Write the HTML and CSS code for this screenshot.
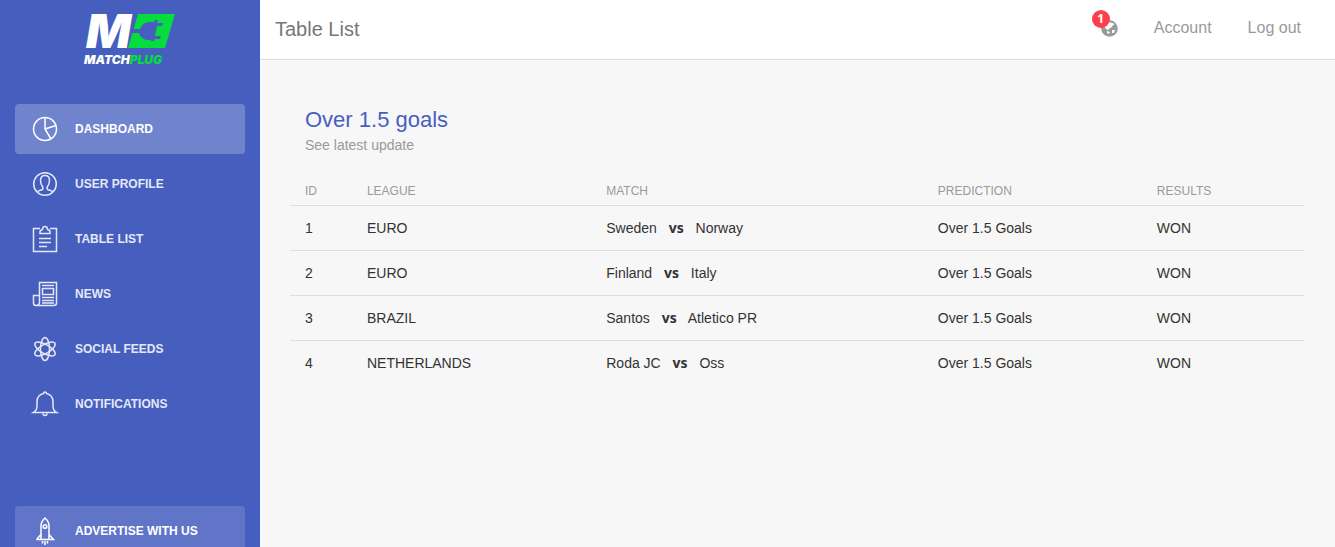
FILE: index.html
```html
<!DOCTYPE html>
<html lang="en">
<head>
  <meta charset="UTF-8" />
  <meta name="viewport" content="width=device-width, initial-scale=1.0" />
  <title>MatchPlug</title>
  <link rel="stylesheet" href="styles.css">
</head>
<body>
  <div class="wrapper">
    <aside class="sidebar">
      <a href="#" class="logo" aria-label="MatchPlug">
        <svg width="92" height="56" viewBox="0 0 92 56">
          <text class="logo-m" x="2" y="38">M</text>
          <path fill="#05dc3e" d="M54 4H91L81 38H44Z"/>
          <path fill="#465fbf" d="M48 19H56Q59 12 65 12H70L71 10H74L73 13H79L78 16H73L71 26H77L76 29H71L70 31H67V30H64Q57 30 55 23H46Z"/>
          <text class="logo-name" x="0" y="54">MATCH<tspan fill="#05dc3e">PLUG</tspan></text>
        </svg>
      </a>
      <ul class="nav">
        <li class="active">
          <a href="#">
            <svg class="icon" viewBox="0 0 28 28"><circle cx="14" cy="14" r="11.5"/><path d="M14 2.5V14L20 24M14 14L25 10.5"/></svg>
            Dashboard
          </a>
        </li>
        <li>
          <a href="#">
            <svg class="icon" viewBox="0 0 28 28"><circle cx="14" cy="14" r="11.3"/><path d="M6 22Q7.500 20.500 11.500 19.500Q12.500 18 11.500 16.500Q9.500 14 9.500 10.500Q9.500 5.500 14 5.500T18.500 10.500Q18.500 14 16.500 16.500Q15.500 18 16.500 19.500Q20.500 20.500 22 22"/></svg>
            User Profile
          </a>
        </li>
        <li>
          <a href="#">
            <svg class="icon" viewBox="0 0 28 28"><path d="M9 3.500H2.500V26.500H25.500V3.500H19M9 8.500V7Q9 5 11.500 4.500Q11.500 1.500 14 1.500T16.500 4.500Q19 5 19 7V8.500ZM8 13.500H20M8 17.500H20M8 21.500H16"/></svg>
            Table List
          </a>
        </li>
        <li>
          <a href="#">
            <svg class="icon" viewBox="0 0 28 28"><path d="M8.500 22V2.500H25.500V23Q25.500 25.500 23 25.500H5Q2.500 25.500 2.500 23V15.500H8.500V22Q8.500 25.500 5 25.500M11 5.500H23M11.500 8.500H22.500V14.500H11.500ZM11 17.500H23M11 20.500H23M11 23H23"/></svg>
            News
          </a>
        </li>
        <li>
          <a href="#">
            <svg class="icon" viewBox="0 0 28 28"><ellipse cx="14" cy="14" rx="4.500" ry="11.500"/><ellipse cx="14" cy="14" rx="4.500" ry="11.500" transform="rotate(60 14 14)"/><ellipse cx="14" cy="14" rx="4.500" ry="11.500" transform="rotate(120 14 14)"/></svg>
            Social Feeds
          </a>
        </li>
        <li>
          <a href="#">
            <svg class="icon" viewBox="0 0 28 28"><path d="M2.500 22.500Q6 20.500 6 16V12Q6 5 12.500 3.500Q12.500 2 14 2T15.500 3.500Q22 5 22 12V16Q22 20.500 25.500 22.500ZM12 23.500Q12 25.500 14 25.500T16 23.500"/></svg>
            Notifications
          </a>
        </li>
        <li class="active-pro">
          <a href="#">
            <svg class="icon" viewBox="0 0 28 28"><path d="M10 22.500V9Q10 4.500 14 1Q18 4.500 18 9V22.500M5.500 22.500H22.500L18 17.500M5.500 22.500L10 17.500M11.500 24V26.500M14 24V28M16.500 24V26.500"/><circle cx="14" cy="9.500" r="1.800"/></svg>
            Advertise with us
          </a>
        </li>
      </ul>
    </aside>

    <div class="main-panel">
      <nav class="navbar">
        <a href="#" class="navbar-brand">Table List</a>
        <div class="navbar-right">
          <a href="#" class="notify" aria-label="Notifications">
            <svg width="17" height="17" viewBox="0 0 17 17"><circle cx="8.500" cy="8.500" r="8.300" fill="#9a9a9a"/><path fill="#fff" d="M4 4L8 2L11 3L14 4L12 5L11 7L9 8L7 10L5 9L3 6ZM11 10L14 10L13 13L11 13ZM6 11L9 12L8 14L6 13Z"/></svg>
            <span class="badge">1</span>
          </a>
          <a href="#">Account</a>
          <a href="#">Log out</a>
        </div>
      </nav>

      <main class="content">
        <div class="card-header">
          <h4 class="title">Over 1.5 goals</h4>
          <p class="category">See latest update</p>
        </div>
        <table class="table">
          <colgroup>
            <col class="col-id">
            <col class="col-league">
            <col class="col-match">
            <col class="col-prediction">
            <col>
          </colgroup>
          <thead>
            <tr>
              <th>ID</th>
              <th>League</th>
              <th>Match</th>
              <th>Prediction</th>
              <th>Results</th>
            </tr>
          </thead>
          <tbody>
            <tr>
              <td>1</td>
              <td>EURO</td>
              <td>Sweden <b>vs</b> Norway</td>
              <td>Over 1.5 Goals</td>
              <td>WON</td>
            </tr>
            <tr>
              <td>2</td>
              <td>EURO</td>
              <td>Finland <b>vs</b> Italy</td>
              <td>Over 1.5 Goals</td>
              <td>WON</td>
            </tr>
            <tr>
              <td>3</td>
              <td>BRAZIL</td>
              <td>Santos <b>vs</b> Atletico PR</td>
              <td>Over 1.5 Goals</td>
              <td>WON</td>
            </tr>
            <tr>
              <td>4</td>
              <td>NETHERLANDS</td>
              <td>Roda JC <b>vs</b> Oss</td>
              <td>Over 1.5 Goals</td>
              <td>WON</td>
            </tr>
          </tbody>
        </table>
      </main>
    </div>
  </div>
</body>
</html>
```
FILE: styles.css
```css
* { box-sizing: border-box; }
body { margin: 0; font-family: "Liberation Sans", Arial, sans-serif; font-size: 14px; line-height: 20px; color: #333; background: #f7f7f7; }
a { color: inherit; text-decoration: none; }

.wrapper { display: flex; height: 100vh; overflow: hidden; }

/* sidebar */
.sidebar { flex: 0 0 260px; background: #465fbf; color: #fff; overflow: hidden; }
.logo { display: flex; justify-content: center; padding-top: 10px; }
.logo svg { overflow: visible; }
.logo-m { font: italic 900 47px Inter, sans-serif; fill: #fff; }
.logo-name { font: italic 900 12px Inter, sans-serif; fill: #fff; }
.nav { list-style: none; margin: 38px 15px 0; padding: 0; display: flex; flex-direction: column; gap: 5px; }
.nav a { display: flex; align-items: center; gap: 16px; height: 50px; padding-left: 16px; border-radius: 4px; font-size: 12px; font-weight: bold; text-transform: uppercase; opacity: 0.86; }
.nav .active a { background: rgba(255, 255, 255, 0.23); opacity: 1; }
.nav .active-pro { margin-top: 72px; }
.nav .active-pro a { background: rgba(255, 255, 255, 0.14); opacity: 1; }
.icon { width: 28px; height: 28px; fill: none; stroke: #fff; stroke-width: 1.5; }

/* top bar */
.main-panel { flex: 1; min-width: 0; }
.navbar { display: flex; justify-content: space-between; height: 60px; padding: 0 34px 0 15px; background: #fff; border-bottom: 1px solid #ddd; }
.navbar-brand { font-size: 20px; line-height: 58px; color: #777; }
.navbar-right { display: flex; align-items: center; gap: 36px; height: 56px; font-size: 16px; color: #9a9a9a; }
.notify { position: relative; display: flex; }
.badge { position: absolute; top: -10px; left: -9px; width: 18px; height: 18px; border-radius: 50%; background: #fb404b; color: #fff; font: bold 12px/18px "Open Sans", sans-serif; text-align: center; }

/* table */
.content { padding: 45px 31px 0 30px; }
.card-header { padding: 0 15px; }
.title { margin: 0; font-size: 22px; line-height: 30px; font-weight: normal; color: #465fbf; }
.category { margin: 0; color: #9a9a9a; }
.table { width: 100%; margin-top: 20px; border-collapse: collapse; table-layout: fixed; }
.col-id { width: 6.8%; }
.col-league { width: 23.6%; }
.col-match { width: 32.7%; }
.col-prediction { width: 21.6%; }
.table th { padding: 6px 8px 4px; text-align: left; font-size: 12px; font-weight: normal; text-transform: uppercase; color: #9a9a9a; }
.table td { padding: 12px 8px; border-top: 1px solid #ddd; }
.table th:first-child, .table td:first-child { padding-left: 15px; }
.table b { margin: 0 8px; font-family: "Open Sans", sans-serif; line-height: 1; }
```
